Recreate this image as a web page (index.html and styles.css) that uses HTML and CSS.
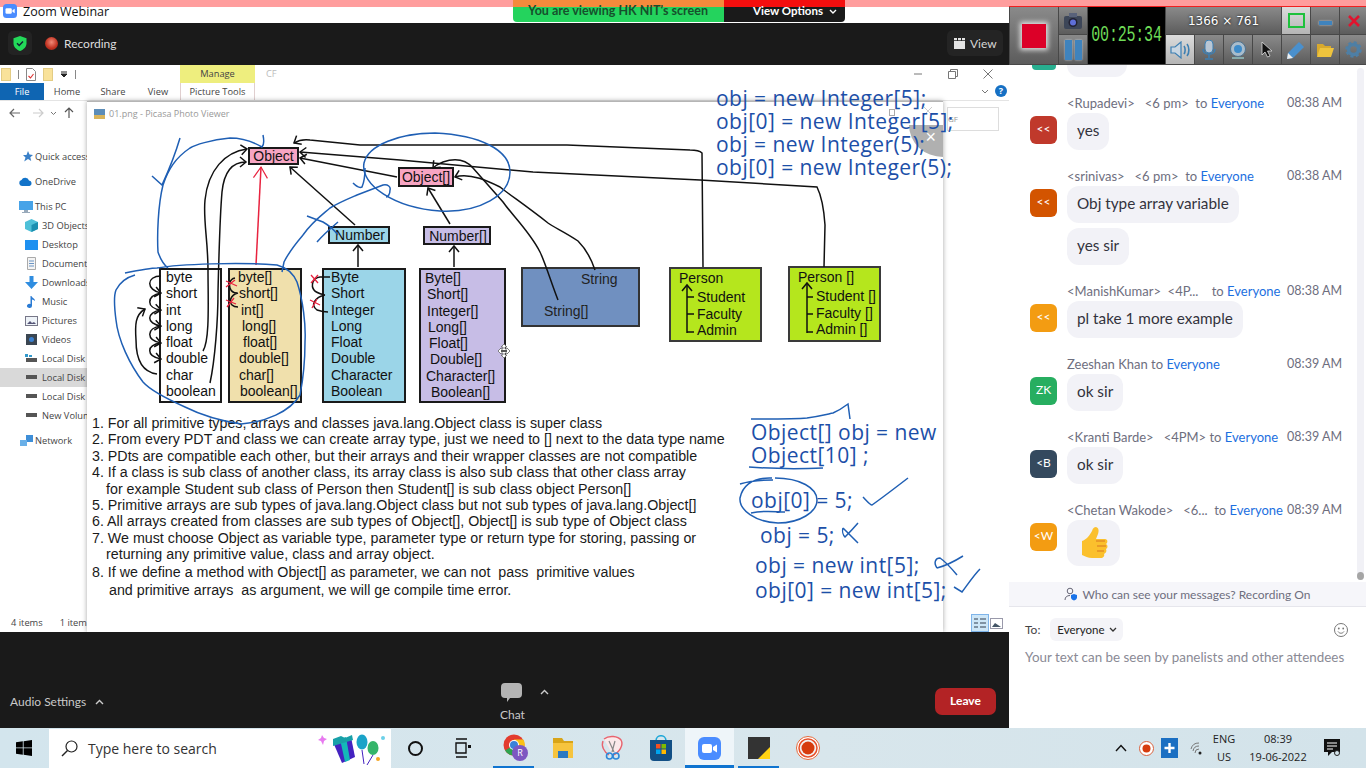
FILE: index.html
```html
<!DOCTYPE html>
<html lang="en">
<head>
  <meta charset="UTF-8">
  <meta name="viewport" content="width=device-width, initial-scale=1.0">
  <title>Zoom Webinar</title>
  <link rel="stylesheet" href="styles.css">
</head>
<body>
  <div class="strip"></div>

  <!-- Screen share banner -->
  <div class="banner">
    <div class="banner-msg">You are viewing HK NIT's screen</div>
    <div class="banner-opt">View Options <svg width="8" height="6" viewBox="0 0 8 6"><path d="M1 1l3 3 3-3" fill="none" stroke="#fff" stroke-width="1.4"/></svg></div>
  </div>

  <div class="main">
    <div class="left">
      <div class="titlebar">
        <svg class="zoom-logo" width="14" height="14" viewBox="0 0 14 14"><rect width="14" height="14" rx="3.5" fill="#4a8cff"/><rect x="2.5" y="4.2" width="6.3" height="5.6" rx="1.2" fill="#fff"/><path d="M9.4 6.3l2.3-1.6v4.6L9.4 7.7z" fill="#fff"/></svg>
        <span>Zoom Webinar</span>
      </div>

      <div class="topbar">
        <div class="shield-btn">
          <svg width="14" height="15" viewBox="0 0 14 15"><path d="M7 0l6.500 2.200v5c0 3.600-2.700 6.200-6.500 7.800C3.200 13.400.5 10.800.5 7.200v-5z" fill="#23d959"/><path d="M4 7.300l2.200 2.200L10 5.600" fill="none" stroke="#123" stroke-width="1.500"/></svg>
        </div>
        <div class="rec-dot"></div>
        <span class="rec-label">Recording</span>
        <div class="view-btn">
          <svg width="11" height="11" viewBox="0 0 11 11"><path d="M0 3h11v8H0zM0 0h3v2.300H0zM4 0h3v2.300H4zM8 0h3v2.300H8z" fill="#e4e4e4"/></svg>
          View
        </div>
      </div>

      <!-- Shared screen -->
      <div class="screen">
        <div class="explorer">
          <div class="qat">
            <div class="qat-icons">
              <span class="mini-folder"></span><span class="qat-sep"></span>
              <svg width="10" height="13" viewBox="0 0 10 13"><path d="M.5.5h6l3 3v9H.5z" fill="#fff" stroke="#888"/><path d="M2.500 8l2 2 3-4" fill="none" stroke="#d33" stroke-width="1.100"/></svg>
              <span class="mini-folder"></span>
              <svg width="8" height="7" viewBox="0 0 8 7"><path d="M1 1h6M1 3l3 3 3-3z" stroke="#222" fill="#222"/></svg>
              <span class="qat-sep"></span>
            </div>
            <div class="manage-tab">Manage</div>
            <span class="qat-title">CF</span>
            <div class="win-btns">
              <svg width="10" height="10" viewBox="0 0 10 10"><path d="M1 5h8" stroke="#777"/></svg>
              <svg width="10" height="10" viewBox="0 0 10 10"><path d="M.5 2.500h7v7h-7zM2.500 2.500v-2h7v7h-2" fill="none" stroke="#777"/></svg>
              <svg width="10" height="10" viewBox="0 0 10 10"><path d="M.5.5l9 9M9.500.5l-9 9" stroke="#777"/></svg>
            </div>
          </div>
          <div class="tabs">
            <div class="tab tab-file">File</div>
            <div class="tab tab-home">Home</div>
            <div class="tab tab-share">Share</div>
            <div class="tab tab-view">View</div>
            <div class="tab tab-tools">Picture Tools</div>
            <svg class="tabs-chev" width="8" height="5" viewBox="0 0 8 5"><path d="M1 1l3 3 3-3" fill="none" stroke="#777"/></svg>
            <div class="help">?</div>
          </div>
          <div class="nav-row">
            <svg width="70" height="12" viewBox="0 0 70 12"><path d="M1 6h10M5 2L1 6l4 4" fill="none" stroke="#666" stroke-width="1.200"/><path d="M24 6h10M30 2l4 4-4 4" fill="none" stroke="#ccc" stroke-width="1.200"/><path d="M42 5l2.500 2.500L47 5" fill="none" stroke="#777"/><path d="M60 11V1M56 5l4-4 4 4" fill="none" stroke="#555" stroke-width="1.200"/></svg>
            <div class="search-mini">GF</div>
          </div>
          <div class="sidebar">
            <div class="side-item si-quick"><svg width="11" height="11" viewBox="0 0 11 11"><path d="M6 0l1.500 3.600 3.500.3-2.700 2.300.9 3.800L6 8 2.200 10.500l1.300-4L1 4h3.500z" fill="#3a80c8"/></svg>Quick access</div>
            <div class="side-item si-drive"><svg width="13" height="9" viewBox="0 0 13 9"><path d="M3 9a3 3 0 0 1-.5-5.900A4 4 0 0 1 10 3.500 2.800 2.800 0 0 1 10.500 9z" fill="#1273c9"/></svg>OneDrive</div>
            <div class="side-item si-pc"><svg width="14" height="12" viewBox="0 0 14 12"><rect width="14" height="9" fill="#47a3e8"/><path d="M5 9h4v2H5zM3 11h8v1H3z" fill="#9ab"/></svg>This PC</div>
            <div class="side-item si-sub"><svg width="13" height="13" viewBox="0 0 13 13"><path d="M6.500 0L13 3v7l-6.500 3L0 10V3z" fill="#4ec0d8"/><path d="M6.500 6L13 3v7l-6.500 3z" fill="#1c8fb0"/></svg>3D Objects</div>
            <div class="side-item si-sub"><svg width="13" height="10" viewBox="0 0 13 10"><rect width="13" height="10" fill="#1e90f0"/></svg>Desktop</div>
            <div class="side-item si-sub"><svg width="13" height="13" viewBox="0 0 13 13"><path d="M2.500.5h8v12h-8z" fill="#f4f4f4" stroke="#aaa"/><path d="M4 4h5M4 6.500h5M4 9h5" stroke="#6a94c4"/></svg>Documents</div>
            <div class="side-item si-sub"><svg width="13" height="13" viewBox="0 0 13 13"><path d="M4.500 0h4v6H13l-6.500 7L0 6h4.500z" fill="#2f8de0"/></svg>Downloads</div>
            <div class="side-item si-sub"><svg width="13" height="12" viewBox="0 0 13 12"><path d="M5.500 0l1 0c.5 2 3.500 2 3.500 5-1-1-2-1.500-3-1.500V10a2.500 2 0 1 1-1.500-1.900z" fill="#2a7bd4"/></svg>Music</div>
            <div class="side-item si-sub"><svg width="13" height="10" viewBox="0 0 13 10"><rect x=".5" y=".5" width="12" height="9" fill="#eef3f8" stroke="#778"/><path d="M2 8l3-3 2 2 2-1 2 2z" fill="#557"/></svg>Pictures</div>
            <div class="side-item si-sub"><svg width="13" height="11" viewBox="0 0 13 11"><rect x="1" width="11" height="11" fill="#3b4652"/><circle cx="6.500" cy="5.500" r="2.500" fill="#3a80d0"/></svg>Videos</div>
            <div class="side-item si-sub"><svg width="13" height="9" viewBox="0 0 13 9"><path d="M1 4h11v4H1z" fill="#555"/><path d="M0 0h3v3H0zM4 1h3v2H4z" fill="#39c"/></svg>Local Disk</div>
            <div class="side-item si-sub si-active"><svg width="13" height="5" viewBox="0 0 13 5"><path d="M1 0h11v4H1z" fill="#555"/></svg>Local Disk</div>
            <div class="side-item si-sub"><svg width="13" height="5" viewBox="0 0 13 5"><path d="M1 0h11v4H1z" fill="#555"/></svg>Local Disk</div>
            <div class="side-item si-sub"><svg width="13" height="5" viewBox="0 0 13 5"><path d="M1 0h11v4H1z" fill="#555"/></svg>New Volume</div>
            <div class="side-item si-net"><svg width="13" height="11" viewBox="0 0 13 11"><path d="M6 0h7v7H6z" fill="#3f8fd8"/><path d="M0 5h7v6H0z" fill="#6ab0e8"/></svg>Network</div>
          </div>
          <div class="status"><span>4 items</span><span>1 item</span></div>
          <div class="view-icons">
            <svg width="18" height="18" viewBox="0 0 18 18"><rect x=".5" y=".5" width="17" height="17" fill="#cde6f7" stroke="#7eb4ea"/><path d="M3 5h4M9 5h6M3 9h4M9 9h6M3 13h4M9 13h6" stroke="#678" stroke-width="1.500"/></svg>
            <svg width="13" height="11" viewBox="0 0 13 11"><rect x=".5" y=".5" width="12" height="10" fill="#fff" stroke="#99a"/><path d="M2 9l3-4 3 2 3 2z" fill="#456"/></svg>
          </div>
        </div>

        <!-- Picasa window with the slide -->
        <div class="picasa">
          <div class="picasa-title">
            <svg width="11" height="10" viewBox="0 0 11 10"><rect width="11" height="10" fill="#5c8db8"/><path d="M0 6h11v4H0z" fill="#d9b45a"/></svg>
            01.png - Picasa Photo Viewer
          </div>
          <span class="picasa-max"></span>
          <svg class="picasa-x" width="10" height="10" viewBox="0 0 10 10"><path d="M1 1l8 8M9 1l-8 8" stroke="#ccc"/></svg>
          <div class="picasa-close">×</div>

          <div class="node n-object pink">Object</div>
          <div class="node n-objarr pink">Object[]</div>
          <div class="node n-number blue">Number</div>
          <div class="node n-numarr lilac">Number[]</div>

          <div class="node n-list n-prim">
            <div>byte</div><div>short</div><div>int</div><div>long</div><div>float</div><div>double</div><div>char</div><div>boolean</div>
          </div>
          <div class="node n-list n-parr sand">
            <div class="i0">byte[]</div><div class="i1">short[]</div><div class="i3">int[]</div><div class="i4">long[]</div><div class="i5">float[]</div><div class="i1">double[]</div><div class="i1">char[]</div><div class="i2">boolean[]</div>
          </div>
          <div class="node n-list n-wrap blue">
            <div>Byte</div><div>Short</div><div>Integer</div><div>Long</div><div>Float</div><div>Double</div><div>Character</div><div>Boolean</div>
          </div>
          <div class="node n-list n-warr lilac">
            <div class="i0">Byte[]</div><div class="i2">Short[]</div><div class="i2">Integer[]</div><div class="i3">Long[]</div><div class="i4">Float[]</div><div class="i5">Double[]</div><div class="i1">Character[]</div><div class="i6">Boolean[]</div>
          </div>
          <div class="node n-string">
            <div class="str-a">String</div>
            <div class="str-b">String[]</div>
          </div>
          <div class="node n-person lime">
            <div class="p-head">Person</div>
            <div class="p-sub">Student</div><div class="p-sub">Faculty</div><div class="p-sub">Admin</div>
          </div>
          <div class="node n-person n-person2 lime">
            <div class="p-head">Person []</div>
            <div class="p-sub">Student []</div><div class="p-sub">Faculty []</div><div class="p-sub">Admin []</div>
          </div>

          <ol class="rules">
            <li>1. For all primitive types, arrays and classes java.lang.Object class is super class</li>
            <li>2. From every PDT and class we can create array type, just we need to [] next to the data type name</li>
            <li>3. PDts are compatible each other, but their arrays and their wrapper classes are not compatible</li>
            <li>4. If a class is sub class of another class, its array class is also sub class that other class array</li>
            <li class="cont">for example Student sub class of Person then Student[] is sub class object Person[]</li>
            <li>5. Primitive arrays are sub types of java.lang.Object class but not sub types of java.lang.Object[]</li>
            <li>6. All arrays created from classes are sub types of Object[], Object[] is sub type of Object class</li>
            <li>7. We must choose Object as variable type, parameter type or return type for storing, passing or</li>
            <li class="cont">returning any primitive value, class and array object.</li>
            <li class="gap">8. If we define a method with Object[] as parameter, we can not&nbsp; pass&nbsp; primitive values</li>
            <li class="cont gap2">and primitive arrays&nbsp; as argument, we will ge compile time error.</li>
          </ol>
        </div>

        <!-- Annotations typed and drawn over the shared screen -->
        <div class="note note-top">obj = new Integer[5];<br>obj[0] = new Integer[5];<br>obj = new Integer(5);<br>obj[0] = new Integer(5);</div>
        <div class="note note-a">Object[] obj = new<br>Object[10] ;</div>
        <div class="note note-b">obj[0] = 5;</div>
        <div class="note note-c">obj = 5;</div>
        <div class="note note-d">obj = new int[5];</div>
        <div class="note note-e">obj[0] = new int[5];</div>

        <svg class="ink" width="1009" height="567" viewBox="0 65 1009 567">
          <defs>
            <marker id="head" markerWidth="12" markerHeight="12" refX="9" refY="6" orient="auto" markerUnits="userSpaceOnUse"><path d="M3 1l6 5-6 5" fill="none" stroke="#111" stroke-width="1.500"/></marker>
            <marker id="headred" markerWidth="16" markerHeight="16" refX="13" refY="8" orient="auto" markerUnits="userSpaceOnUse"><path d="M2 1l11 7-11 7" fill="none" stroke="#e8233f" stroke-width="1.200"/></marker>
          </defs>
          <g class="ink-black">
            <path marker-end="url(#head)" d="M203 351C210 340 208 300 208 270C208 240 203 220 205 200C208 170 225 152 247 149"/>
            <path marker-end="url(#head)" d="M210 383C215 360 218 320 218 292C219 250 220 215 222 192C224 172 232 162 246 162"/>
            <path marker-end="url(#head)" d="M355 225L290 167"/>
            <path marker-end="url(#head)" d="M397 177L300 158"/>
            <path marker-end="url(#head)" d="M450 224L428 188"/>
            <path marker-end="url(#head)" d="M358 267V245"/>
            <path marker-end="url(#head)" d="M454 267V246"/>
            <path marker-end="url(#head)" d="M703 267L702 153C700 151 695 150 690 150L567 145L360 145L310 140C303 139 299 140 294 143"/>
            <path marker-end="url(#head)" d="M824 267L825 225C824 210 821 195 817 187L700 180L533 172L400 160L300 152"/>
            <path marker-end="url(#head)" d="M595 270C590 255 585 248 578 241C565 232 555 228 548 223C525 205 510 195 500 187C490 182 470 172 455 177"/>
            <path marker-end="url(#head)" d="M558 300C552 285 545 262 540 252C530 232 512 215 503 202L473 168C466 160 455 158 443 162C438 164 435 166 433 168"/>
            <!-- widening chain -->
            <path marker-end="url(#head)" d="M161 276C146 276 146 290 161 293"/>
            <path marker-end="url(#head)" d="M161 293C146 296 146 308 161 310"/>
            <path marker-end="url(#head)" d="M161 310C146 312 146 324 161 326"/>
            <path marker-end="url(#head)" d="M161 326C146 328 146 340 161 343"/>
            <path marker-end="url(#head)" d="M161 343C146 345 146 356 161 359"/>
            <path marker-end="url(#head)" d="M157 374C142 372 136 360 136 340C135 325 135 315 145 309"/>
            <path d="M235 278C229 279 229 286 230 288C231 291 234 293 237 293M238 293C230 295 229 302 232 305C233 306 235 307 238 307"/>
            <path d="M330 277H320C312 278 311 286 314 290C316 293 321 294 325 295M325 295C315 297 310 305 317 310C320 311 324 312 328 312"/>
            <path marker-end="url(#head)" d="M687 333V285"/>
            <path d="M687 297H694M687 314H694M687 332H694"/>
            <path marker-end="url(#head)" d="M807 333V283"/>
            <path d="M807 297H813M807 314H813M807 332H813"/>
          </g>
          <g class="ink-red">
            <path marker-end="url(#headred)" class="red-line" d="M256 265L261 167"/>
            <path d="M226 281l11 5M226 287l9-7M226 300l10 4M227 307l7-9M311 275l7 8M311 283l7-8M310 300l10 5M312 308l5-9"/>
          </g>
          <g class="ink-blue">
            <path d="M180 138C175 155 168 172 162 185L152 176"/>
            <path d="M263 135C264 140 264 145 262 147C250 140 240 138 230 138C210 140 195 145 190 148C175 158 168 170 163 185C158 205 157 235 158 252C160 258 163 264 168 268"/>
            <path d="M125 273C140 270 150 268 157 268C180 264 240 262 277 265C288 268 294 275 297 282C303 300 306 325 305 342C305 365 303 380 300 395C290 412 265 422 241 424C215 420 195 412 185 407C165 398 150 390 143 382C130 365 118 340 116 320C114 305 114 295 116 290C120 282 128 277 135 275"/>
            <path d="M435 133C400 133 368 145 364 163C360 185 395 208 440 211C480 213 510 195 510 172C510 150 480 135 435 133C425 133 415 134 405 136"/>
            <path d="M353 183C356 186 360 188 362 187C365 180 365 172 365 168"/>
            <path d="M282 272L284 262C290 250 297 242 303 235C312 222 322 215 330 208C340 202 350 198 357 195L383 185C388 184 391 187 390 190C390 194 388 197 386 197"/>
            <path d="M307 216L323 222C330 226 335 231 338 235M317 242C323 235 331 228 338 222"/>
            <path d="M751 419C775 419 795 419 807 418C820 416 828 414 833 413C840 410 844 407 848 404L850 419"/>
            <path d="M749 467C775 469 800 469 823 468"/>
            <path d="M740 484C750 481 762 480 773 480M772 478C750 477 742 488 740 498C739 510 755 522 778 523C800 523 817 512 817 500C817 488 800 478 775 478"/>
            <path d="M751 513C765 510 775 512 785 512"/>
            <path d="M863 497C866 500 870 505 872 505C882 498 895 488 908 478"/>
            <path d="M843 528L858 543M858 523C852 530 848 534 845 537C843 535 842 531 843 528"/>
            <path d="M937 568C933 562 936 558 940 558C946 562 952 569 957 575M963 556C955 561 945 566 937 568"/>
            <path d="M954 587L962 592C968 584 974 575 980 569"/>
          </g>
          <g class="cursor-move">
            <path d="M504 344l3 3h-2v2h2v-1l3 3-3 3v-1h-2v2h2l-3 3-3-3h2v-2h-2v1l-3-3 3-3v1h2v-2h-2z" fill="#fff" stroke="#666" stroke-width=".8"/>
            <path d="M501 350h6v2h-6z" fill="#555"/>
          </g>
        </svg>
      </div>

      <div class="bottombar">
        <div class="audio">Audio Settings <svg width="9" height="6" viewBox="0 0 9 6"><path d="M1 5l3.500-3.500L8 5" fill="none" stroke="#ccc" stroke-width="1.400"/></svg></div>
        <div class="chat-btn">
          <div class="chat-icon-row">
            <svg width="21" height="19" viewBox="0 0 21 19"><path d="M4 0h13a4 4 0 0 1 4 4v7a4 4 0 0 1-4 4H9l-3 4v-4H4a4 4 0 0 1-4-4V4a4 4 0 0 1 4-4z" fill="#b4b4b4"/></svg>
            <svg class="chat-chev" width="9" height="6" viewBox="0 0 9 6"><path d="M1 5l3.500-3.500L8 5" fill="none" stroke="#ccc" stroke-width="1.400"/></svg>
          </div>
          <span>Chat</span>
        </div>
        <div class="leave">Leave</div>
      </div>
    </div>

    <div class="right">
      <!-- Screen recorder toolbar -->
      <div class="recorder">
        <div class="rc rc-stop"><span class="stop-sq"></span></div>
        <div class="rc rc-cam"><svg width="18" height="16" viewBox="0 0 18 16"><rect y="3" width="18" height="13" rx="2" fill="#3d4658"/><rect x="5" y="0" width="8" height="4" fill="#59627a"/><circle cx="9" cy="9.500" r="4.500" fill="#223"/><circle cx="9" cy="9.500" r="3" fill="#5f6fd8"/></svg></div>
        <div class="rc rc-pause"><span></span><span></span></div>
        <div class="rc rc-timer"><span>00:25:34</span></div>
        <div class="rc rc-size">1366 × 761</div>
        <div class="rc rc-t rc-light"><span class="green-sq"></span></div>
        <div class="rc rc-t"><span class="min-bar"></span></div>
        <div class="rc rc-t"><svg width="12" height="12" viewBox="0 0 12 12"><path d="M1 1l10 10M11 1L1 11" stroke="#e0142e" stroke-width="2.600"/></svg></div>
        <div class="rc rc-light rc-b"><svg width="20" height="18" viewBox="0 0 20 18"><path d="M1 6h4l6-5v16l-6-5H1z" fill="#c9d6e2" stroke="#3d7fb2" stroke-width="1.200"/><path d="M14 5c1.500 2 1.500 6 0 8M17 3c2.500 3 2.500 9 0 12" fill="none" stroke="#3d7fb2" stroke-width="1.600"/></svg></div>
        <div class="rc rc-b"><svg width="14" height="20" viewBox="0 0 14 20"><rect x="3" y="0" width="8" height="13" rx="4" fill="#b8c6d4" stroke="#3d7fb2"/><path d="M1 9c0 7 12 7 12 0M7 15v3M3 19h8" fill="none" stroke="#3d7fb2" stroke-width="1.500"/></svg></div>
        <div class="rc rc-b"><svg width="18" height="18" viewBox="0 0 18 18"><circle cx="9" cy="8" r="7.500" fill="#a9bccb" stroke="#50738f"/><circle cx="9" cy="8" r="4" fill="#3d8ccb"/><path d="M3 17h12" stroke="#8aa" stroke-width="2"/></svg></div>
        <div class="rc rc-b"><svg width="12" height="17" viewBox="0 0 12 17"><path d="M1 1v13l3-3 2.500 5 2.500-1-2.500-5H11z" fill="#111" stroke="#ddd" stroke-width=".8"/></svg></div>
        <div class="rc rc-b"><svg width="18" height="18" viewBox="0 0 18 18"><path d="M12 1l5 5L6 17l-6 1 1-6z" fill="#4a90cd"/><path d="M1 12l5 5-6 1z" fill="#eee"/></svg></div>
        <div class="rc rc-b"><svg width="18" height="14" viewBox="0 0 18 14"><path d="M1 14V1h6l2 2h6v3H5z" fill="#d8a92d"/><path d="M4 5h14l-3 9H1z" fill="#eec33d"/></svg></div>
        <div class="rc rc-b"><svg width="17" height="17" viewBox="0 0 17 17"><circle cx="8.500" cy="8.500" r="5" fill="none" stroke="#4e7fa5" stroke-width="3.500"/><circle cx="8.500" cy="8.500" r="7" fill="none" stroke="#4e7fa5" stroke-width="2.500" stroke-dasharray="3 2.500"/></svg></div>
      </div>

      <div class="chat">
        <div class="scrolltrack"><span class="scrollthumb"></span></div>
        <div class="msg-cut">
          <span class="avatar-cut"></span><span class="bubble-cut"></span>
        </div>

        <div class="msg">
          <div class="msg-head"><span class="who">&lt;Rupadevi&gt;&nbsp;&nbsp; &lt;6 pm&gt;&nbsp; to <b>Everyone</b></span><time>08:38 AM</time></div>
          <div class="msg-line"><span class="avatar av-red">&lt;&lt;</span><div class="bubble">yes</div></div>
        </div>
        <div class="msg">
          <div class="msg-head"><span class="who">&lt;srinivas&gt;&nbsp;&nbsp; &lt;6 pm&gt;&nbsp; to <b>Everyone</b></span><time>08:38 AM</time></div>
          <div class="msg-line"><span class="avatar av-orange">&lt;&lt;</span><div class="bubble">Obj type array variable</div></div>
          <div class="msg-line more"><div class="bubble">yes sir</div></div>
        </div>
        <div class="msg">
          <div class="msg-head"><span class="who">&lt;ManishKumar&gt;&nbsp; &lt;4P...&nbsp;&nbsp;&nbsp; to <b>Everyone</b></span><time>08:38 AM</time></div>
          <div class="msg-line"><span class="avatar av-amber">&lt;&lt;</span><div class="bubble">pl take 1 more example</div></div>
        </div>
        <div class="msg">
          <div class="msg-head"><span class="who">Zeeshan Khan to <b>Everyone</b></span><time>08:39 AM</time></div>
          <div class="msg-line"><span class="avatar av-green">ZK</span><div class="bubble">ok sir</div></div>
        </div>
        <div class="msg">
          <div class="msg-head"><span class="who">&lt;Kranti Barde&gt;&nbsp;&nbsp; &lt;4PM&gt; to <b>Everyone</b></span><time>08:39 AM</time></div>
          <div class="msg-line"><span class="avatar av-navy">&lt;B</span><div class="bubble">ok sir</div></div>
        </div>
        <div class="msg">
          <div class="msg-head"><span class="who">&lt;Chetan Wakode&gt;&nbsp;&nbsp; &lt;6...&nbsp; to <b>Everyone</b></span><time>08:39 AM</time></div>
          <div class="msg-line"><span class="avatar av-amber">&lt;W</span><div class="bubble bubble-emoji">
            <svg width="28" height="32" viewBox="0 0 28 32"><path d="M2 14c4-1 8-6 10-10 1-3 2-4 4-4 3 1 3 4 2 7l-2 5h9c3 0 3 4 1 5 2 1 2 4 0 5 1 2 0 4-2 5 1 2-1 4-3 4H12c-4 0-7-2-10-3z" fill="#fbc02d"/><path d="M16 14h9M17 19h9M17 24h7" stroke="#e58e26" stroke-width="1.500" fill="none"/></svg>
          </div></div>
        </div>

        <div class="who-see">
          <svg width="14" height="14" viewBox="0 0 14 14"><circle cx="6" cy="4" r="2.800" fill="none" stroke="#667"/><path d="M1 13c0-3 2-4.500 5-4.500" fill="none" stroke="#667"/><path d="M10 7l3 1v2.500c0 1.500-1.500 2.500-3 3-1.500-.5-3-1.500-3-3V8z" fill="#1a73e8"/></svg>
          Who can see your messages? Recording On
        </div>
        <div class="compose">
          <div class="to-row">
            <span>To:</span>
            <div class="to-pill">Everyone <svg width="8" height="6" viewBox="0 0 8 6"><path d="M1 1l3 3 3-3" fill="none" stroke="#333" stroke-width="1.300"/></svg></div>
            <svg class="smile" width="14" height="14" viewBox="0 0 14 14"><circle cx="7" cy="7" r="6.500" fill="none" stroke="#777"/><circle cx="4.800" cy="5.500" r=".9" fill="#777"/><circle cx="9.200" cy="5.500" r=".9" fill="#777"/><path d="M4 8.500c1.500 2.300 4.500 2.300 6 0" fill="none" stroke="#777"/></svg>
          </div>
          <div class="placeholder">Your text can be seen by panelists and other attendees</div>
        </div>
      </div>
    </div>
  </div>

  <!-- Windows taskbar -->
  <div class="taskbar">
    <div class="start"><svg width="16" height="16" viewBox="0 0 16 16"><path d="M0 2.300l6.800-1V7.500H0zM7.600 1.200L16 0v7.500H7.600zM0 8.300h6.800v6.400l-6.800-1zM7.600 8.300H16V16l-8.400-1.200z" fill="#000"/></svg></div>
    <div class="search">
      <svg width="17" height="17" viewBox="0 0 17 17"><circle cx="10.500" cy="6.500" r="5.500" fill="none" stroke="#222" stroke-width="1.200"/><path d="M6.500 10.500L1 16" stroke="#222" stroke-width="1.400"/></svg>
      <span>Type here to search</span>
      <svg class="gift" width="68" height="38" viewBox="0 0 68 38"><path d="M4 6l2 3 3 1-3 2-1 4-2-4-3-1 3-2z" fill="#e879f0"/><path d="M15 13l18-5 4 20-13 6z" fill="#4422c0"/><path d="M22 10l6-2 4 23-5 2z" fill="#14b8b8"/><path d="M15 10l8-3 4 2 7-3 1 5-20 6z" fill="#18a0a8"/><ellipse cx="44" cy="13" rx="5.500" ry="7.500" fill="#1aa3c8"/><ellipse cx="55" cy="19" rx="5.500" ry="7" fill="#35b56a"/><path d="M44 21l2 14M55 26l-6 10" stroke="#4422c0" fill="none"/><circle cx="65" cy="9" r="2" fill="#6cd0e8"/><circle cx="60" cy="30" r="2" fill="#f5a623"/></svg>
    </div>
    <div class="task"><span class="cortana"></span></div>
    <div class="task task-tv"><svg width="16" height="20" viewBox="0 0 16 20"><path d="M1 1h11M1 19h11M1 5h10v10H1z" fill="none" stroke="#111" stroke-width="1.400"/><rect x="13" y="7" width="3" height="3" fill="#111"/></svg></div>
    <div class="task task-on task-chrome">
      <svg width="26" height="28" viewBox="0 0 26 28"><circle cx="11" cy="11" r="10.500" fill="#e33b2e"/><path d="M11 11L2 16.500A10.500 10.500 0 0 0 14 21z" fill="#2ea44f"/><path d="M11 5.500h9.300A10.500 10.500 0 0 1 14 21z" fill="#fbc116"/><circle cx="11" cy="11" r="5" fill="#fff"/><circle cx="11" cy="11" r="4" fill="#3b82d8"/><circle cx="17" cy="19" r="8" fill="#7d57c1"/><text x="17" y="22" class="badge-r">R</text></svg>
    </div>
    <div class="task"><svg width="22" height="22" viewBox="0 0 22 22"><path d="M1 1h9l2 3h9v5H1z" fill="#d8a419"/><rect x="1" y="6" width="20" height="15" fill="#f6c43e"/><rect x="6" y="14" width="10" height="7" fill="#2b79c2"/></svg></div>
    <div class="task"><svg width="24" height="26" viewBox="0 0 24 26"><path d="M4 4c5-4 14-3 17 1 3 5-2 13-8 15" fill="#fbe9ea" stroke="#e8636e" stroke-width="1.400"/><path d="M3 6c-2 5 1 11 6 14" fill="none" stroke="#e8636e" stroke-width="1.400"/><path d="M9 6l5 11M15 6l-3 11" stroke="#888" stroke-width="1.200"/><circle cx="9.500" cy="21" r="3" fill="none" stroke="#2f88d8" stroke-width="1.600"/><circle cx="16" cy="21" r="3" fill="none" stroke="#2f88d8" stroke-width="1.600"/></svg></div>
    <div class="task"><svg width="24" height="26" viewBox="0 0 24 26"><path d="M7 6c0-7 10-7 10 0" fill="none" stroke="#20a8d8" stroke-width="1.600"/><path d="M1 5h22v17a4 4 0 0 1-4 4H5a4 4 0 0 1-4-4z" fill="#124f85"/><rect x="7" y="9" width="4.500" height="4.500" fill="#f25022"/><rect x="12.500" y="9" width="4.500" height="4.500" fill="#7fba00"/><rect x="7" y="14.500" width="4.500" height="4.500" fill="#00a4ef"/><rect x="12.500" y="14.500" width="4.500" height="4.500" fill="#ffb900"/></svg></div>
    <div class="task task-on task-active"><svg width="23" height="23" viewBox="0 0 23 23"><rect width="23" height="23" rx="6" fill="#4a8cff"/><rect x="4" y="7" width="10" height="9" rx="2" fill="#fff"/><path d="M15 10l4-2.500v8L15 13z" fill="#fff"/></svg></div>
    <div class="task task-on task-open"><svg width="22" height="22" viewBox="0 0 22 22"><rect width="22" height="22" fill="#333"/><path d="M22 10v12H10z" fill="#ffd314"/></svg></div>
    <div class="task"><svg width="24" height="24" viewBox="0 0 24 24"><circle cx="12" cy="12" r="11.500" fill="#fff" stroke="#e36a3c"/><circle cx="12" cy="12" r="9" fill="#f2f2f2" stroke="#e8502a" stroke-width="1.500"/><circle cx="12" cy="12" r="6.500" fill="#d63c0e"/></svg></div>
    <div class="tray">
      <svg class="tray-up" width="12" height="8" viewBox="0 0 12 8"><path d="M1 7l5-5.500L11 7" fill="none" stroke="#111" stroke-width="1.400"/></svg>
      <svg class="tray-rec" width="15" height="15" viewBox="0 0 15 15"><circle cx="7.500" cy="7.500" r="7" fill="#fff" stroke="#d9603c"/><circle cx="7.500" cy="7.500" r="4" fill="#d63c0e"/></svg>
      <svg class="tray-plus" width="17" height="20" viewBox="0 0 17 20"><rect width="17" height="20" fill="#1b6fc2"/><path d="M8.500 5v10M3.500 10h10" stroke="#fff" stroke-width="2.400"/></svg>
      <svg class="tray-wifi" width="14" height="14" viewBox="0 0 14 14"><path d="M1 8a8 8 0 0 1 8-6M3 10a6 6 0 0 1 6-5M5 12a4 4 0 0 1 4-4" fill="none" stroke="#777"/><circle cx="10" cy="12" r="1.500" fill="#222"/></svg>
      <div class="tray-lang">ENG<br>US</div>
      <div class="tray-clock">08:39<br>19-06-2022</div>
      <svg class="tray-note" width="17" height="18" viewBox="0 0 17 18"><path d="M0 0h16v13H8l-4 4v-4H0z" fill="#111"/><path d="M3 4h10M3 7h10M3 10h6" stroke="#fff"/><circle cx="13" cy="14" r="2.500" fill="#d5e5ec" stroke="#222"/></svg>
    </div>
  </div>
</body>
</html>
```

FILE: styles.css
```css
* { box-sizing: border-box; }
html, body { margin: 0; height: 100%; overflow: hidden; }
body { width: 1366px; height: 768px; display: flex; flex-direction: column; font-family: "Lato", "Noto Sans", sans-serif; background: #fff; position: relative; }

.strip { height: 7px; background: #ff9d9d; flex: none; }
.main { flex: 1; display: flex; min-height: 0; }
.left { width: 1009px; display: flex; flex-direction: column; flex: none; }
.right { flex: 1; display: flex; flex-direction: column; min-width: 0; }

/* banner */
.banner { position: absolute; left: 513px; top: 0; width: 332px; height: 22px; display: flex; border-radius: 0 0 4px 4px; overflow: hidden; font-family: "Lato", sans-serif; font-size: 12px; z-index: 5; }
.banner-msg { width: 211px; padding: 3px 0 0 15px; color: #16502c; font-weight: 700; font-size: 12.500px; background: linear-gradient(#f58a3c 7px, #24d35d 7px); }
.banner-opt { flex: 1; padding: 4px 0 0 29px; color: #fff; font-weight: 700; font-size: 11.500px; background: linear-gradient(#f40e0e 7px, #1a1a1a 7px); }
.banner-opt svg { margin-left: 3px; }

/* zoom window */
.titlebar { height: 16px; display: flex; align-items: center; padding: 0 0 3px 3px; font-family: "Open Sans", sans-serif; font-size: 12.500px; color: #111; position: relative; }
.titlebar span { margin-left: 6px; margin-top: -4px; }
.zoom-logo { margin-top: -6px; }
.topbar { height: 42px; background: #1a1a1a; display: flex; align-items: center; padding: 0 6px 2px 8px; color: #ddd; font-size: 12px; }
.shield-btn { width: 24px; height: 24px; border-radius: 5px; background: #232323; display: flex; align-items: center; justify-content: center; }
.rec-dot { width: 13px; height: 13px; border-radius: 50%; background: radial-gradient(circle at 50% 40%, #f08a78, #c0301f 60%, #7d2a22); margin-left: 13px; }
.rec-label { margin-left: 6px; }
.view-btn { margin-left: auto; width: 56px; height: 26px; background: #242424; border-radius: 6px; display: flex; align-items: center; gap: 5px; padding-left: 7px; color: #d6d6d6; }

.screen { flex: 1; position: relative; overflow: hidden; background: #fff; min-height: 0; }
.explorer { position: absolute; inset: 0; font-family: "Open Sans", sans-serif; font-size: 9.300px; color: #444; }
.qat { height: 18px; display: flex; position: relative; }
.qat-icons { width: 180px; display: flex; align-items: center; gap: 7px; padding-left: 1px; }
.mini-folder { width: 10px; height: 13px; background: #f9e29a; border: 1px solid #e3cc84; }
.qat-sep { width: 1px; height: 9px; background: #888; }
.manage-tab { width: 75px; background: #eeee7e; text-align: center; line-height: 18px; }
.qat-title { margin-left: 11px; line-height: 18px; color: #bbb; }
.win-btns { margin-left: auto; width: 80px; margin-right: 16px; display: flex; justify-content: space-between; align-items: center; }
.tabs { height: 18px; display: flex; align-items: center; position: relative; border-bottom: 1px solid #e4e4e4; }
.tab { height: 17px; line-height: 17px; text-align: center; }
.tab-file { width: 44px; background: #0f65b2; color: #fff; }
.tab-home { width: 46px; }
.tab-share { width: 46px; }
.tab-view { width: 44px; }
.tab-tools { width: 75px; border: solid #e0cfcf; border-width: 0 1px; }
.tabs-chev { position: absolute; left: 981px; top: 6px; }
.help { position: absolute; left: 995px; top: 2px; width: 12px; height: 12px; border-radius: 50%; background: #1670c4; color: #fff; font-size: 9px; font-weight: 700; text-align: center; line-height: 12px; }
.nav-row { height: 30px; padding: 6px 0 0 9px; position: relative; }
.search-mini { position: absolute; left: 947px; top: 6px; width: 52px; height: 24px; border: 1px solid #ddd; line-height: 22px; color: #999; font-size: 8px; }
.sidebar { width: 87px; overflow: hidden; height: 420px; padding-top: 0; white-space: nowrap; }
.side-item { height: 19px; display: flex; align-items: center; gap: 4px; padding-left: 20px; }
.side-item svg { flex: none; }
.si-quick { margin-top: 16px; height: 19px; padding-left: 22px; gap: 2px; }
.si-drive { margin-top: 6px; padding-left: 19px; gap: 3px; }
.si-pc { margin-top: 6px; padding-left: 19px; gap: 2px; }
.si-sub { padding-left: 25px; gap: 4px; }
.si-active { background: #d9d9d9; }
.si-net { margin-top: 6px; padding-left: 20px; gap: 2px; }
.status { position: absolute; left: 11px; top: 551px; display: flex; gap: 17px; }
.view-icons { position: absolute; left: 971px; top: 549px; display: flex; align-items: center; gap: 1px; }

.picasa { position: absolute; left: 87px; top: 36px; width: 856px; height: 531px; background: #fff; border-top: 1px solid #b5b5b5; box-shadow: 0 0 5px rgba(0, 0, 0, .35); font-family: "Liberation Sans", sans-serif; font-size: 14px; color: #111; }
.picasa-title { position: absolute; left: 7px; top: 5px; display: flex; align-items: center; gap: 4px; font-family: "Open Sans", sans-serif; font-size: 9px; color: #999; }
.picasa-max { position: absolute; left: 802px; top: 7px; width: 6px; height: 7px; border: 1px solid #aaa; }
.picasa-x { position: absolute; left: 836px; top: 4px; }
.picasa-close { position: absolute; left: 822px; top: 23px; width: 34px; height: 32px; background: #b0b0b0; border-bottom-left-radius: 100%; color: #fff; font-size: 18px; line-height: 24px; text-align: right; padding-right: 7px; }

.node { position: absolute; border: 2px solid #1a1a1a; background: #fff; }
.pink { background: #f7a5c3; }
.blue { background: #9bd5e8; }
.lilac { background: #c7bde6; }
.sand { background: #f0e0ac; }
.lime { background: #b5e61d; }
.n-object, .n-objarr, .n-number, .n-numarr { display: flex; align-items: center; justify-content: center; line-height: 1; }
.n-object { left: 161px; top: 45px; width: 51px; height: 18px; }
.n-objarr { left: 311px; top: 65px; width: 56px; height: 20px; }
.n-number { left: 241px; top: 124px; width: 62px; height: 18px; padding-left: 2px; }
.n-numarr { left: 336px; top: 124px; width: 68px; height: 19px; padding-left: 2px; }
.n-list { top: 166px; height: 135px; line-height: 16.300px; padding-top: 0; }
.n-list > :first-child { margin-top: -1px; }
.n-prim { left: 72px; width: 63px; padding-left: 5px; }
.n-parr { left: 141px; width: 74px; padding-left: 8px; }
.n-wrap { left: 235px; width: 84px; padding-left: 7px; }
.n-warr { left: 332px; width: 87px; padding-left: 4px; }
.n-warr > :first-child { margin-top: 0; }
.i1 { margin-left: 1px; }
.i2 { margin-left: 2px; }
.i3 { margin-left: 3px; }
.i4 { margin-left: 4px; }
.i5 { margin-left: 5px; }
.i6 { margin-left: 6px; }
.n-string { left: 434px; top: 165px; width: 119px; height: 60px; background: #7090c0; color: #222; border-color: #333; }
.str-a { margin: 2px 0 0 58px; }
.str-b { margin: 16px 0 0 21px; }
.n-person { left: 582px; top: 165px; width: 93px; height: 75px; padding: 1px 0 0 8px; line-height: 16.400px; border-color: #3a3a3a; }
.n-person2 { left: 701px; top: 164px; width: 93px; height: 76px; padding-left: 8px; }
.p-head { margin-bottom: 3px; }
.p-sub { margin-left: 18px; }

.rules { position: absolute; left: 5px; top: 313px; margin: 0; padding: 0; list-style: none; font-size: 14.250px; line-height: 16.400px; white-space: nowrap; color: #1a1a1a; }
.cont { padding-left: 14px; }
.gap { margin-top: 1px; }
.gap2 { margin-top: 2px; padding-left: 17px; }

/* annotations */
.note { position: absolute; font-family: "Open Sans", sans-serif; font-size: 21px; letter-spacing: .45px; color: #1c4fa8; white-space: nowrap; line-height: 23px; }
.note-top { left: 716px; top: 22px; }
.note-a { left: 751px; top: 356px; }
.note-b { left: 751px; top: 424px; }
.note-c { left: 760px; top: 459px; }
.note-d { left: 755px; top: 489px; }
.note-e { left: 755px; top: 514px; }
.ink { position: absolute; left: 0; top: 0; pointer-events: none; }
.ink-black path { fill: none; stroke: #111; stroke-width: 1.500; }
.ink-red path { fill: none; stroke: #e8233f; stroke-width: 1.300; }
.ink-red .red-line { stroke-width: 1.500; }
.ink-blue path { fill: none; stroke: #1f5fb4; stroke-width: 1.500; }

.bottombar { height: 96px; background: #1a1a1a; display: flex; position: relative; color: #c9c9c9; font-size: 12px; }
.audio { position: absolute; left: 10px; top: 62px; display: flex; align-items: center; gap: 9px; }
.chat-btn { position: absolute; left: 501px; top: 51px; display: flex; flex-direction: column; align-items: flex-start; gap: 5px; }
.chat-icon-row { display: flex; align-items: flex-start; }
.chat-chev { margin: 6px 0 0 18px; }
.chat-btn span { margin-left: -1px; }
.leave { position: absolute; left: 935px; top: 56px; width: 61px; height: 27px; border-radius: 7px; background: #b32325; color: #fff; font-weight: 700; text-align: center; line-height: 26px; }

/* recorder */
.recorder { height: 59px; margin-top: -1px; flex: none; display: grid; grid-template-columns: 48px 28px 77px repeat(6, 28px) 27px; grid-template-rows: 27px 29px; gap: 1px; background: #484848; border-top: 1px solid #f02020; padding-left: 1px; }
.rc { background: linear-gradient(#8a8a8a, #5c5c5c); display: flex; align-items: center; justify-content: center; }
.rc-stop { grid-column: 1; grid-row: 1 / span 2; }
.stop-sq { width: 24px; height: 24px; background: #dc0028; box-shadow: 0 0 5px 2px rgba(255, 255, 255, .8); }
.rc-cam { grid-column: 2; grid-row: 1; }
.rc-pause { grid-column: 2; grid-row: 2; gap: 3px; }
.rc-pause span { width: 7px; height: 20px; background: #3f83bd; box-shadow: 0 0 2px #cde; }
.rc-timer { grid-column: 3; grid-row: 1 / span 2; background: #000; color: #6fdc58; font-family: "Liberation Mono", monospace; font-size: 15px; letter-spacing: -.200px; }
.rc-timer span { display: inline-block; transform: scaleY(1.500); }
.rc-size { grid-column: 4 / span 4; grid-row: 1; color: #fff; font-size: 12px; font-family: "DejaVu Sans", sans-serif; text-shadow: 0 0 3px #000; }
.rc-t { grid-row: 1; }
.rc-light { background: linear-gradient(#dcdcdc, #b5b5b5); }
.green-sq { width: 17px; height: 15px; border: 2px solid #1ec13c; }
.min-bar { width: 13px; height: 4px; background: #3f83bd; margin-top: 4px; box-shadow: 0 0 2px #cde; }
.rc-b { grid-row: 2; }

/* chat */
.chat { flex: 1; position: relative; display: flex; flex-direction: column; min-height: 0; }
.scrolltrack { position: absolute; left: 348px; top: 3px; width: 7px; height: 512px; border-radius: 4px; background: #f1f1f6; }
.scrollthumb { position: absolute; left: 0; bottom: 0; width: 7px; height: 8px; border-radius: 50%; background: #a5a5a5; }
.msg-cut { height: 12px; position: relative; overflow: hidden; flex: none; }
.avatar-cut { position: absolute; left: 23px; top: -10px; width: 24px; height: 15px; background: #27ae8f; border-radius: 4px; }
.bubble-cut { position: absolute; left: 58px; top: -20px; width: 60px; height: 32px; background: #f2f2f7; border-radius: 12px; }
.msg { padding: 15px 0 0 21px; position: relative; width: 333px; }
.msg-head { height: 21px; padding-left: 37px; display: flex; justify-content: space-between; align-items: center; font-size: 13px; color: #6e6e7e; white-space: nowrap; }
.msg-head b { font-weight: 400; color: #1c6fe0; }
.msg-head time { font-size: 12.500px; }
.msg-line { display: flex; gap: 10px; margin-top: 0; }
.msg-line.more { padding-left: 37px; margin-top: 5px; }
.avatar { width: 27px; height: 28px; flex: none; margin-top: 3px; border-radius: 6px; color: #fff; font-size: 12px; text-align: center; line-height: 25px; }
.av-red { background: #c0392b; }
.av-orange { background: #d35400; }
.av-amber { background: #f39c12; }
.av-green { background: #27ae60; }
.av-navy { background: #34495e; }
.bubble { background: #f2f2f7; border-radius: 12px; height: 37px; padding: 0 10px; font-size: 15.300px; line-height: 35px; color: #33333d; }
.bubble-emoji { height: 46px; width: 53px; padding: 7px 0 0 13px; line-height: 1; }
.who-see { position: absolute; left: 0; right: 0; top: 517px; height: 25px; background: #f6f6fa; border-bottom: 1px solid #e6e6ec; display: flex; align-items: center; justify-content: center; gap: 4px; font-size: 12px; color: #6e6e7e; }
.compose { position: absolute; left: 0; right: 0; top: 553px; padding: 0 16px; }
.to-row { display: flex; align-items: center; font-size: 12px; color: #444; position: relative; }
.to-pill { margin-left: 10px; width: 73px; height: 23px; border-radius: 6px; background: #f4f4f8; color: #222; display: flex; align-items: center; justify-content: center; gap: 4px; font-size: 11.500px; }
.smile { margin-left: auto; margin-right: 2px; }
.placeholder { margin-top: 8px; font-size: 13.400px; color: #8a8a95; white-space: nowrap; }

/* taskbar */
.taskbar { height: 40px; flex: none; background: linear-gradient(90deg, #d3e5ed, #d8e6ec 60%, #d3e3ea); display: flex; align-items: center; position: relative; }
.start { width: 49px; display: flex; padding-left: 16px; }
.search { width: 342px; height: 39px; background: #fff; display: flex; align-items: center; padding-left: 12px; font-family: "Open Sans", sans-serif; font-size: 14px; color: #333; position: relative; }
.search span { margin-left: 10px; }
.gift { position: absolute; left: 269px; top: 0; }
.task { width: 49px; height: 40px; display: flex; align-items: center; justify-content: center; position: relative; }
.cortana { width: 15px; height: 15px; border-radius: 50%; border: 2.500px solid #111; }
.task-tv svg { margin-right: 4px; }
.task-on::after { content: ""; position: absolute; left: 4px; right: 4px; bottom: 0; height: 2px; background: #0f74d0; }
.task-active { background: #eef5f9; }
.task-active::after { left: 0; right: 0; height: 3px; }
.task-chrome svg { margin-left: 4px; }
.badge-r { font-family: "Open Sans", sans-serif; font-size: 9px; fill: #fff; text-anchor: middle; }
.tray { margin-left: auto; display: flex; align-items: center; font-family: "Open Sans", sans-serif; font-size: 11px; color: #222; text-align: center; line-height: 18px; width: 251px; white-space: nowrap; }
.tray-rec { margin-left: 12px; }
.tray-plus { margin-left: 7px; }
.tray-wifi { margin-left: 12px; }
.tray-lang { margin-left: 7px; width: 26px; }
.tray-clock { margin-left: 10px; width: 62px; }
.tray-note { margin-left: 15px; }
```
